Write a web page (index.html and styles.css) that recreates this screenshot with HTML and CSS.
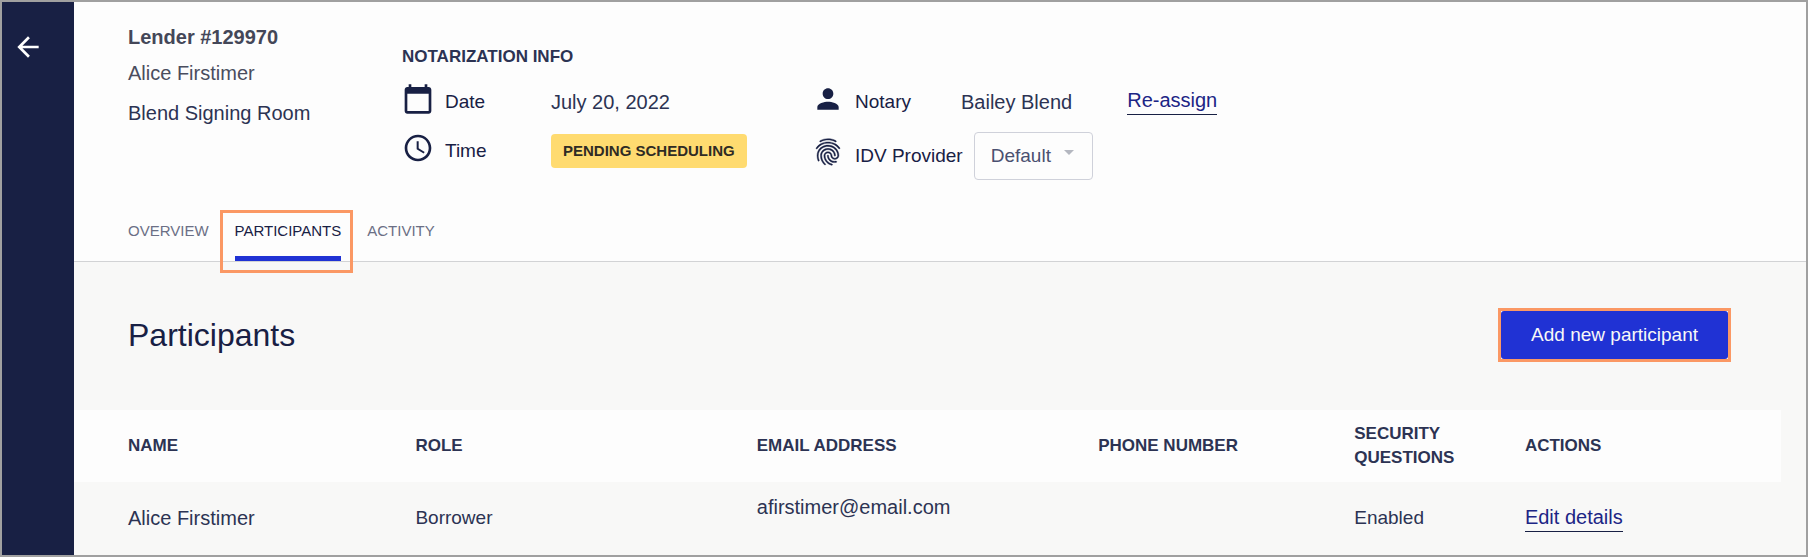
FILE: index.html
```html
<!DOCTYPE html>
<html lang="en">
<head>
<meta charset="utf-8">
<title>Participants</title>
<link rel="stylesheet" href="styles.css">
</head>
<body>
<div class="app">
  <nav class="rail" aria-label="Back">
    <button class="back" type="button" aria-label="Back">
      <svg class="back-icon" viewBox="0 0 24 24"><path d="M20 11H7.83l5.59-5.59L12 4l-8 8 8 8 1.41-1.41L7.83 13H20v-2z"/></svg>
    </button>
  </nav>
  <main class="main">
    <header class="header">
      <div class="summary">
        <div class="lender">
          <h2 class="lender-id">Lender #129970</h2>
          <p class="lender-name">Alice Firstimer</p>
          <p class="lender-room">Blend Signing Room</p>
        </div>
        <section class="info">
          <h3 class="info-title">NOTARIZATION INFO</h3>
          <div class="info-groups">
            <div class="group group-schedule">
              <div class="row">
                <svg class="icon" viewBox="0 0 24 24"><path d="M20 3h-1V1h-2v2H7V1H5v2H4c-1.1 0-2 .9-2 2v16c0 1.1.9 2 2 2h16c1.1 0 2-.9 2-2V5c0-1.1-.9-2-2-2zm0 18H4V8h16v13z"/></svg>
                <span class="label">Date</span>
                <span class="value">July 20, 2022</span>
              </div>
              <div class="row">
                <svg class="icon" viewBox="0 0 24 24"><path d="M11.99 2C6.47 2 2 6.48 2 12s4.47 10 9.99 10C17.52 22 22 17.52 22 12S17.52 2 11.99 2zM12 20c-4.42 0-8-3.58-8-8s3.58-8 8-8 8 3.58 8 8-3.58 8-8 8zm.5-13H11v6l5.25 3.15.75-1.23-4.5-2.67z"/></svg>
                <span class="label">Time</span>
                <span class="pill">PENDING SCHEDULING</span>
              </div>
            </div>
            <div class="group">
              <div class="row">
                <svg class="icon" viewBox="0 0 24 24"><path d="M12 12c2.21 0 4-1.79 4-4s-1.79-4-4-4-4 1.79-4 4 1.79 4 4 4zm0 2c-2.67 0-8 1.34-8 4v2h16v-2c0-2.66-5.33-4-8-4z"/></svg>
                <span class="label">Notary</span>
                <span class="value">Bailey Blend</span>
                <a class="link reassign" href="#reassign">Re-assign</a>
              </div>
              <div class="row row-provider">
                <svg class="icon icon-print" viewBox="0 0 24 24"><path d="M17.81 4.47c-.08 0-.16-.02-.23-.06C15.66 3.42 14 3 12.01 3c-1.98 0-3.86.47-5.57 1.41-.24.13-.54.04-.68-.2-.13-.24-.04-.55.2-.68C7.82 2.52 9.86 2 12.01 2c2.13 0 3.99.47 6.03 1.52.25.13.34.43.21.67-.09.18-.26.28-.44.28zM3.5 9.72c-.1 0-.2-.03-.29-.09-.23-.16-.28-.47-.12-.7.99-1.4 2.25-2.5 3.75-3.27C9.98 4.04 14 4.03 17.15 5.65c1.5.77 2.76 1.86 3.75 3.25.16.22.11.54-.12.7-.23.16-.54.11-.7-.12-.9-1.26-2.04-2.25-3.39-2.94-2.87-1.47-6.54-1.47-9.4.01-1.36.7-2.5 1.7-3.4 2.96-.08.14-.23.21-.39.21zm6.25 12.07c-.13 0-.26-.05-.35-.15-.87-.87-1.34-1.43-2.01-2.64-.69-1.23-1.05-2.73-1.05-4.34 0-2.97 2.54-5.39 5.66-5.39s5.66 2.42 5.66 5.39c0 .28-.22.5-.5.5s-.5-.22-.5-.5c0-2.42-2.09-4.39-4.66-4.39-2.57 0-4.66 1.97-4.66 4.39 0 1.44.32 2.77.93 3.85.64 1.15 1.08 1.64 1.85 2.42.19.2.19.51 0 .71-.11.1-.24.15-.37.15zm7.17-1.85c-1.19 0-2.24-.3-3.1-.89-1.49-1.01-2.38-2.65-2.38-4.39 0-.28.22-.5.5-.5s.5.22.5.5c0 1.41.72 2.74 1.94 3.56.71.48 1.54.71 2.54.71.24 0 .64-.03 1.04-.1.27-.05.53.13.58.41.05.27-.13.53-.41.58-.57.11-1.07.12-1.21.12zM14.91 22c-.04 0-.09-.01-.13-.02-1.59-.44-2.63-1.03-3.72-2.1-1.4-1.39-2.17-3.24-2.17-5.22 0-1.62 1.38-2.94 3.08-2.94 1.7 0 3.08 1.32 3.08 2.94 0 1.07.93 1.94 2.08 1.94s2.08-.87 2.08-1.94c0-3.77-3.25-6.83-7.25-6.83-2.84 0-5.44 1.58-6.61 4.03-.39.81-.59 1.76-.59 2.8 0 .78.07 2.01.67 3.61.1.26-.03.55-.29.64-.26.1-.55-.04-.64-.29-.49-1.31-.73-2.61-.73-3.96 0-1.2.23-2.29.68-3.24 1.33-2.79 4.28-4.6 7.51-4.6 4.55 0 8.25 3.51 8.25 7.83 0 1.62-1.38 2.94-3.08 2.94s-3.08-1.32-3.08-2.94c0-1.07-.93-1.94-2.08-1.94s-2.08.87-2.08 1.94c0 1.71.66 3.31 1.87 4.51.95.94 1.86 1.46 3.27 1.85.27.07.42.35.35.61-.05.23-.26.38-.47.38z"/></svg>
                <label class="label label-provider" for="provider">IDV Provider</label>
                <span class="select-box">
                  <select class="select" id="provider"><option>Default</option></select>
                  <svg class="caret" viewBox="0 0 8 4"><path d="M0 0h8L4 4z"/></svg>
                </span>
              </div>
            </div>
          </div>
        </section>
      </div>
      <nav class="tabs">
        <a class="tab" href="#overview">OVERVIEW</a>
        <a class="tab tab-active" href="#participants" aria-current="page">PARTICIPANTS</a>
        <a class="tab" href="#activity">ACTIVITY</a>
      </nav>
    </header>
    <section class="content">
      <div class="title-bar">
        <h1 class="title">Participants</h1>
        <span class="highlight"><button class="add" type="button">Add new participant</button></span>
      </div>
      <table class="table">
        <thead>
          <tr>
            <th class="c-wide">NAME</th>
            <th class="c-wide">ROLE</th>
            <th class="c-wide">EMAIL ADDRESS</th>
            <th class="c-mid">PHONE NUMBER</th>
            <th class="c-small">SECURITY QUESTIONS</th>
            <th class="c-mid">ACTIONS</th>
          </tr>
        </thead>
        <tbody>
          <tr>
            <td class="name">Alice Firstimer</td>
            <td>Borrower</td>
            <td class="email">afirstimer@email.com</td>
            <td></td>
            <td>Enabled</td>
            <td><a class="link" href="#edit">Edit details</a></td>
          </tr>
        </tbody>
      </table>
    </section>
  </main>
</div>
</body>
</html>
```
FILE: styles.css
```css
* { box-sizing: border-box; }

body {
  margin: 0;
  font-family: "Liberation Sans", Arial, sans-serif;
  font-size: 19px;
  line-height: 24px;
  color: #2c3353;
}

h1, h2, h3, p { margin: 0; }

.app {
  display: flex;
  min-height: 100vh;
  border: 2px solid #a0a0a0;
  background: #f8f8f7;
}

.rail {
  flex: none;
  width: 72px;
  padding: 29px 10px;
  background: #182044;
}

.back {
  display: block;
  padding: 0;
  border: 0;
  background: none;
}

.back-icon {
  display: block;
  width: 32px;
  height: 32px;
  fill: #fff;
}

.main {
  flex: 1;
  min-width: 0;
}

.header {
  padding: 23px 54px 0;
  background: #fdfdfd;
  border-bottom: 1px solid #d2d3d5;
}

.summary { display: flex; }

.lender {
  flex: none;
  width: 274px;
}

.lender-id {
  font-size: 20px;
  color: #444758;
}

.lender-name {
  margin-top: 12px;
  font-size: 20px;
  color: #4a4d5e;
}

.lender-room {
  margin-top: 16px;
  font-size: 20px;
}

.info { padding-top: 20px; }

.info-title {
  font-size: 17px;
}

.info-groups {
  display: flex;
  margin-top: 14px;
}

.group {
  display: flex;
  flex-direction: column;
  gap: 12px;
}

.group-schedule { width: 410px; }

.row {
  display: flex;
  align-items: center;
  min-height: 37px;
}

.icon {
  flex: none;
  align-self: flex-start;
  width: 32px;
  height: 32px;
  margin-right: 11px;
  fill: #182044;
}

.icon-print {
  margin-top: 4px;
  stroke: #182044;
  stroke-width: 0.3;
}

.label {
  width: 106px;
  color: #182044;
}

.value {
  font-size: 20px;
}

.label-provider {
  width: auto;
  margin-right: 11px;
}

.pill {
  padding: 5px 12px;
  border-radius: 4px;
  background: #ffdb70;
  color: #2f2b24;
  font-size: 15px;
  font-weight: bold;
}

.link {
  display: inline-block;
  padding-bottom: 2px;
  border-bottom: 1px solid #182044;
  color: #1c2585;
  font-size: 20px;
  text-decoration: none;
}

.reassign { margin-left: 55px; }

.select-box {
  position: relative;
  display: flex;
}

.select {
  width: 119px;
  height: 48px;
  padding: 0 16px;
  border: 1px solid #cfd1da;
  border-radius: 4px;
  background: #fdfdfd;
  color: #4a5070;
  font: inherit;
  appearance: none;
}

.caret {
  position: absolute;
  top: 18px;
  right: 19px;
  width: 10px;
  height: 5px;
  fill: #b4b7c0;
  pointer-events: none;
}

.tabs {
  display: flex;
  gap: 26px;
  margin-top: 39px;
  font-size: 15px;
}

.tab {
  position: relative;
  padding-bottom: 13px;
  border-bottom: 5px solid transparent;
  color: #6b6f85;
  text-decoration: none;
}

.tab-active {
  border-color: #2032d4;
  color: #182044;
}

/* Callout frame around the current tab */
.tab-active::after {
  content: "";
  position: absolute;
  inset: -9px -12px -17px -15px;
  border: 3px solid #fb9864;
}

.title-bar {
  display: flex;
  align-items: center;
  justify-content: space-between;
  padding: 46px 75px 48px 54px;
}

.title {
  font-size: 32px;
  font-weight: normal;
  line-height: 40px;
  color: #182044;
}

.highlight {
  display: flex;
  border: 3px solid #fb9864;
  background: #fff;
}

.add {
  height: 48px;
  padding: 0 30px;
  border: 0;
  border-radius: 3px;
  background: #2032d4;
  color: #f8f8f7;
  font: inherit;
}

.table {
  width: calc(100% - 25px);
  border-spacing: 0;
  table-layout: fixed;
}

.table th,
.table td {
  height: 72px;
  padding: 0;
  text-align: left;
}

.table th {
  background: #fdfdfd;
  font-size: 17px;
}

.table th:first-child,
.table td:first-child { padding-left: 54px; }

.c-wide { width: 20%; }
.c-mid { width: 15%; }
.c-small { width: 10%; }

.table .name { font-size: 20px; }

.table .email {
  padding-top: 13px;
  font-size: 20px;
  vertical-align: top;
}
```
